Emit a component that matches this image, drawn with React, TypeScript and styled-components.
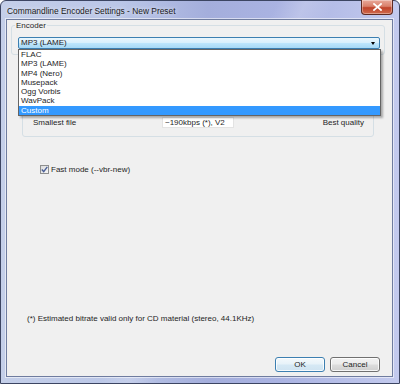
import React from "react";
import styled, { createGlobalStyle } from "styled-components";

const Global = createGlobalStyle`
  html, body { margin: 0; padding: 0; background: #ffffff; overflow: hidden; }
  body { font-family: "Liberation Sans", Arial, sans-serif; }
  #root { width: 400px; height: 384px; }
`;

const Window = styled.div`
  width: 400px;
  height: 384px;
  box-sizing: border-box;
  display: flex;
  flex-direction: column;
  border: 1px solid #3c4562;
  border-radius: 6px 6px 0 0;
  background:
    linear-gradient(115deg, transparent 0%, transparent 48%, rgba(255,255,255,0.18) 53%, transparent 58%, transparent 100%),
    linear-gradient(90deg, #c4cfe9 0%, #bac6e7 30%, #a4aedc 52%, #aab3e2 70%, #c3caee 100%);
  padding: 0 6px 6px 5px;
`;

const TitleBar = styled.div`
  height: 18px;
  display: flex;
  align-items: flex-start;
`;

const Title = styled.div`
  font-size: 8.4px;
  color: #1a1a1a;
  line-height: 9px;
  margin-top: 6px;
  margin-left: 1px;
  text-shadow: 0 0 4px rgba(255,255,255,0.9);
  white-space: nowrap;
`;

const CloseButton = styled.div`
  margin-left: auto;
  margin-top: -1px;
  width: 32px;
  height: 15px;
  box-sizing: border-box;
  border: 1px solid #5e2a22;
  border-top: none;
  border-radius: 0 0 4px 4px;
  background: linear-gradient(180deg, #e9a99a 0%, #d9806b 45%, #c0432b 55%, #cf6a4d 100%);
  box-shadow: inset 0 0 0 1px rgba(255,255,255,0.35);
  display: flex;
  align-items: center;
  justify-content: center;
`;

const Client = styled.div`
  flex: 1;
  position: relative;
  display: flex;
  flex-direction: column;
  background: #f0f0f0;
  border: 1px solid #6f7c9f;
  box-shadow: 0 0 0 1px rgba(255,255,255,0.55);
  font-size: 8px;
  color: #1e1e1e;
`;

const Group = styled.fieldset<{ $left: number; $width: number; $top: number }>`
  margin: ${(p) => p.$top}px 0 0 ${(p) => p.$left}px;
  width: ${(p) => p.$width}px;
  box-sizing: border-box;
  border: 1px solid #d5dfe5;
  border-radius: 3px;
  padding: 0;
  min-width: 0;
`;

const Legend = styled.legend`
  font-size: 8px;
  line-height: 9px;
  padding: 0 1px;
  margin-left: 3px;
  color: #1e1e1e;
`;

const EncoderBody = styled.div`
  padding: 7px 4px 5px 6px;
`;

const ComboWrap = styled.div`
  position: relative;
`;

const Combo = styled.div`
  height: 12px;
  box-sizing: border-box;
  border: 1px solid #3c7fb1;
  border-radius: 2px;
  background: linear-gradient(180deg, #eaf6fd 0%, #d9f0fc 45%, #bee6fd 50%, #a7d9f5 100%);
  display: flex;
  align-items: center;
  padding: 0 4px 0 2px;
  line-height: 10px;
`;

const ComboText = styled.span`
  flex: 1;
`;

const Arrow = styled.span`
  width: 0;
  height: 0;
  border-left: 2.5px solid transparent;
  border-right: 2.5px solid transparent;
  border-top: 3px solid #000;
`;

const DropList = styled.div`
  position: absolute;
  top: 12px;
  left: 0;
  width: 363px;
  height: 67px;
  box-sizing: border-box;
  background: #ffffff;
  border: 1px solid #646464;
  box-shadow: 2px 2px 2px rgba(0,0,0,0.3);
  z-index: 10;
`;

const DropItem = styled.div<{ $selected?: boolean }>`
  height: 9.28px;
  line-height: 9.28px;
  padding-left: 2px;
  font-size: 8px;
  background: ${(p) => (p.$selected ? "#3399ff" : "transparent")};
  color: ${(p) => (p.$selected ? "#ffffff" : "#1e1e1e")};
`;

const QualityGroup = styled.div`
  margin: 8px 0 0 15px;
  width: 352px;
  box-sizing: border-box;
  border: 1px solid #d5dfe5;
  border-radius: 3px;
  padding: 0 9px 8px 9px;
  display: flex;
  flex-direction: column;
`;

const Slider = styled.div`
  height: 53px;
  display: flex;
  flex-direction: column;
  justify-content: center;
`;

const SliderTrack = styled.div`
  height: 3px;
  border: 1px solid #b0b0b0;
  background: #e7eaea;
`;

const ScaleRow = styled.div`
  display: grid;
  grid-template-columns: 1fr auto 1fr;
  align-items: center;
  height: 11px;
`;

const ScaleLeft = styled.span`
  padding-left: 1px;
`;

const ScaleRight = styled.span`
  text-align: right;
`;

const ValueBox = styled.div`
  width: 72px;
  height: 11px;
  box-sizing: border-box;
  background: #ffffff;
  border: 1px solid #e3e3e3;
  line-height: 9px;
  padding-left: 2px;
`;

const CheckRow = styled.label`
  display: flex;
  align-items: center;
  gap: 2px;
  margin: 27px 0 0 33px;
  height: 10px;
`;

const CheckBox = styled.span`
  width: 9px;
  height: 9px;
  box-sizing: border-box;
  border: 1px solid #8e8f8f;
  background: linear-gradient(135deg, #dcdcdc 0%, #f6f6f6 100%);
  display: flex;
  align-items: center;
  justify-content: center;
`;

const Footnote = styled.div`
  margin: auto 0 33px 20px;
  line-height: 10px;
`;

const ButtonRow = styled.div`
  display: flex;
  justify-content: flex-end;
  gap: 5px;
  margin: 0 12px 4px 0;
`;

const Button = styled.button<{ $default?: boolean }>`
  width: 50px;
  height: 15px;
  box-sizing: border-box;
  padding: 0;
  font-family: "Liberation Sans", Arial, sans-serif;
  font-size: 8px;
  color: #1e1e1e;
  border-radius: 3px;
  border: 1px solid ${(p) => (p.$default ? "#3c7fb1" : "#707070")};
  background: ${(p) =>
    p.$default
      ? "linear-gradient(180deg, #f4f9fc 0%, #e7f2f9 48%, #d6e9f5 52%, #cfe3f1 100%)"
      : "linear-gradient(180deg, #f2f2f2 0%, #ebebeb 48%, #dddddd 52%, #cfcfcf 100%)"};
  box-shadow: inset 0 0 0 1px rgba(255,255,255,0.8);
`;

const encoders = ["FLAC", "MP3 (LAME)", "MP4 (Nero)", "Musepack", "Ogg Vorbis", "WavPack", "Custom"];

export default function App() {
  return (
    <>
      <Global />
      <Window>
        <TitleBar>
          <Title>Commandline Encoder Settings - New Preset</Title>
          <CloseButton>
            <svg width="9" height="8" viewBox="0 0 9 8">
              <path d="M1 1 L8 7 M8 1 L1 7" stroke="#ffffff" strokeWidth="1.8" strokeLinecap="square" />
            </svg>
          </CloseButton>
        </TitleBar>
        <Client>
          <Group $left={4} $width={374} $top={1}>
            <Legend>Encoder</Legend>
            <EncoderBody>
              <ComboWrap>
                <Combo>
                  <ComboText>MP3 (LAME)</ComboText>
                  <Arrow />
                </Combo>
                <DropList>
                  {encoders.map((e) => (
                    <DropItem key={e} $selected={e === "Custom"}>
                      {e}
                    </DropItem>
                  ))}
                </DropList>
              </ComboWrap>
            </EncoderBody>
          </Group>
          <QualityGroup>
            <Slider>
              <SliderTrack />
            </Slider>
            <ScaleRow>
              <ScaleLeft>Smallest file</ScaleLeft>
              <ValueBox>~190kbps (*), V2</ValueBox>
              <ScaleRight>Best quality</ScaleRight>
            </ScaleRow>
          </QualityGroup>
          <CheckRow>
            <CheckBox>
              <svg width="7" height="7" viewBox="0 0 7 7">
                <path d="M0.8 3.6 L2.7 5.6 L6.3 0.9" stroke="#4a5f97" strokeWidth="1.4" fill="none" />
              </svg>
            </CheckBox>
            <span>Fast mode (--vbr-new)</span>
          </CheckRow>
          <Footnote>(*) Estimated bitrate valid only for CD material (stereo, 44.1KHz)</Footnote>
          <ButtonRow>
            <Button $default>OK</Button>
            <Button>Cancel</Button>
          </ButtonRow>
        </Client>
      </Window>
    </>
  );
}
